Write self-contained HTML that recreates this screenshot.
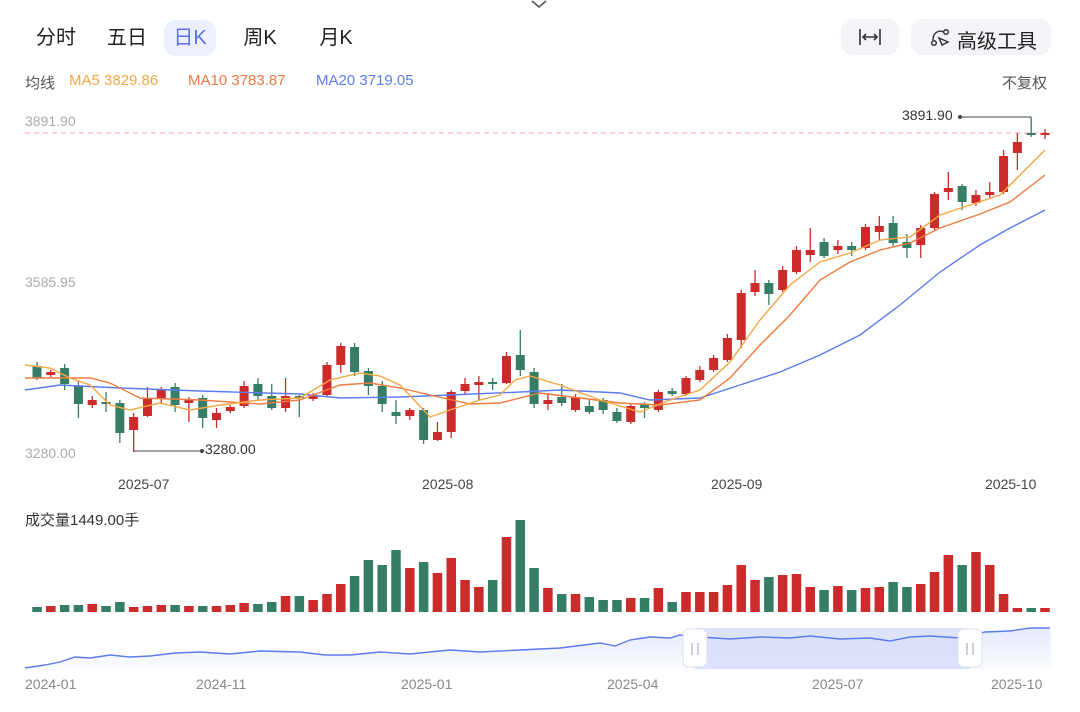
<!DOCTYPE html>
<html><head><meta charset="utf-8"><style>
*{margin:0;padding:0;box-sizing:border-box}
body{width:1080px;height:712px;background:#fff;font-family:"Liberation Sans","Noto Sans CJK SC",sans-serif;position:relative;overflow:hidden;color:#222}
.t{position:absolute;white-space:nowrap}
.tab{position:absolute;top:20px;height:36px;line-height:36px;font-size:20px;color:#222;text-align:center}
.btn{position:absolute;top:19px;height:36px;background:#f3f4f8;border-radius:12px}
</style></head><body>
<svg style="position:absolute;left:530px;top:0" width="18" height="10"><path d="M2 1 L9 7 L16 1" stroke="#555" stroke-width="1.6" fill="none"/></svg>
<div class="tab" style="left:26px;width:60px">分时</div>
<div class="tab" style="left:97px;width:60px">五日</div>
<div class="tab" style="left:164px;width:52px;background:#eceffd;border-radius:12px;color:#5b6ff0">日K</div>
<div class="tab" style="left:230px;width:60px">周K</div>
<div class="tab" style="left:306px;width:60px">月K</div>
<div class="btn" style="left:841px;width:58px"><svg width="58" height="36"><path d="M19 10v16M39 10v16M22 18h14M25 15l-3 3 3 3M33 15l3 3-3 3" stroke="#333" stroke-width="1.6" fill="none"/></svg></div>
<div class="btn" style="left:911px;width:140px"><svg style="position:absolute;left:18px;top:8px" width="22" height="22"><circle cx="5" cy="16" r="2.3" stroke="#333" fill="none" stroke-width="1.5"/><circle cx="17" cy="5" r="2.3" stroke="#333" fill="none" stroke-width="1.5"/><path d="M4 13 C4 4 12 3 14 5 M10 11 l9 4 -6 3 z" stroke="#333" fill="none" stroke-width="1.5"/></svg><span class="t" style="left:46px;top:6px;font-size:20px;color:#222">高级工具</span></div>
<div class="t" style="left:25px;top:72px;font-size:15px;color:#555">均线</div>
<div class="t" style="left:69px;top:72px;font-size:15px;color:#f5a742">MA5 3829.86</div>
<div class="t" style="left:188px;top:72px;font-size:15px;color:#f07a3f">MA10 3783.87</div>
<div class="t" style="left:316px;top:72px;font-size:15px;color:#5b7bf0">MA20 3719.05</div>
<div class="t" style="left:1002px;top:72px;font-size:15px;color:#555">不复权</div>
<div class="t" style="left:25px;top:113px;font-size:14px;color:#aaa">3891.90</div>
<div class="t" style="left:25px;top:274px;font-size:14px;color:#aaa">3585.95</div>
<div class="t" style="left:25px;top:445px;font-size:14px;color:#aaa">3280.00</div>
<div class="t" style="left:902px;top:107px;font-size:14px;color:#333">3891.90</div>
<div class="t" style="left:205px;top:441px;font-size:14px;color:#333">3280.00</div>
<div class="t" style="left:118px;top:476px;font-size:14px;color:#444">2025-07</div>
<div class="t" style="left:422px;top:476px;font-size:14px;color:#444">2025-08</div>
<div class="t" style="left:711px;top:476px;font-size:14px;color:#444">2025-09</div>
<div class="t" style="left:985px;top:476px;font-size:14px;color:#444">2025-10</div>
<div class="t" style="left:25px;top:509px;font-size:15px;color:#333">成交量1449.00手</div>
<div class="t" style="left:25px;top:676px;font-size:14px;color:#888">2024-01</div>
<div class="t" style="left:196px;top:676px;font-size:14px;color:#888">2024-11</div>
<div class="t" style="left:401px;top:676px;font-size:14px;color:#888">2025-01</div>
<div class="t" style="left:607px;top:676px;font-size:14px;color:#888">2025-04</div>
<div class="t" style="left:812px;top:676px;font-size:14px;color:#888">2025-07</div>
<div class="t" style="left:991px;top:676px;font-size:14px;color:#888">2025-10</div>
<svg id="c" style="position:absolute;left:0;top:0" width="1080" height="712"></svg>
<script>
var R="#cc2b2b",G="#367d67";
var C=[[366,378,362,380,0],[372,375,370,377,1],[368,384,364,390,0],[386,404,380,418,0],[400,405,396,408,1],[402,404,392,412,0],[403,433,400,443,0],[417,430,413,452,1],[399,416,387,417,1],[390,399,387,404,1],[387,405,383,412,0],[400,403,397,422,1],[398,418,395,428,0],[413,420,408,428,1],[407,411,405,413,1],[386,406,381,408,1],[384,396,378,400,0],[396,408,384,410,0],[396,408,378,412,1],[396,398,395,417,0],[395,399,393,401,1],[365,395,362,397,1],[346,365,343,373,1],[347,372,343,376,0],[371,386,368,395,0],[386,404,381,412,0],[412,416,400,424,0],[410,416,408,420,1],[410,440,408,444,0],[432,440,422,441,1],[392,432,390,438,1],[384,391,378,394,1],[382,385,376,400,1],[382,384,378,390,0],[356,383,352,384,1],[355,370,330,376,0],[372,404,368,408,0],[400,404,394,410,1],[397,403,384,406,0],[397,410,394,412,1],[406,412,400,414,0],[400,410,398,414,0],[412,421,408,423,0],[406,422,403,424,1],[404,408,402,418,0],[392,410,390,412,1],[391,394,388,396,0],[378,394,376,396,1],[370,380,366,382,1],[358,370,355,372,1],[338,360,334,362,1],[293,340,290,348,1],[283,292,270,296,1],[283,294,280,305,0],[270,290,266,292,1],[250,272,246,274,1],[250,255,228,262,1],[242,256,238,258,0],[246,250,240,254,1],[246,250,242,256,0],[227,248,224,250,1],[226,232,216,240,1],[223,243,216,246,0],[242,248,234,258,0],[228,245,225,258,1],[194,228,192,230,1],[188,192,172,200,1],[186,202,184,210,0],[195,203,190,206,1],[192,195,182,198,1],[156,192,150,194,1],[142,153,133,170,1],[133,135,118,137,0],[133,135,129,139,1]];
var V=[5,6,7,7,8,6,10,5,6,7,7,6,6,6,7,9,8,10,16,16,12,18,28,36,52,47,62,44,50,39,54,32,25,32,75,92,44,24,18,18,15,12,12,14,14,24,10,20,20,20,27,47,32,35,37,38,25,22,26,22,24,25,30,25,28,40,57,47,60,47,18,4,4,4];
var s='<line x1="25" y1="133" x2="1052" y2="133" stroke="#f4a0a0" stroke-dasharray="5,4"/>';
s+='<polyline points="960,117 1031,117 1031,133" stroke="#444" fill="none"/><circle cx="960" cy="117" r="2" fill="#444"/>';
s+='<polyline points="134,452 134,451 202,451" stroke="#444" fill="none"/><circle cx="202" cy="451" r="2" fill="#444"/>';
var sp=(1045-37)/73;
for(var i=0;i<C.length;i++){var c=C[i],x=37+i*sp,col=c[4]?R:G;
s+='<line x1="'+x+'" y1="'+c[2]+'" x2="'+x+'" y2="'+c[3]+'" stroke="'+col+'" stroke-width="1.3"/>';
s+='<rect x="'+(x-4.5)+'" y="'+c[0]+'" width="9" height="'+Math.max(1.5,c[1]-c[0])+'" fill="'+col+'"/>';
var h=V[i]||4;s+='<rect x="'+(x-4.75)+'" y="'+(612-h)+'" width="9.5" height="'+h+'" fill="'+col+'"/>';}
function pl(p,c){s+='<polyline points="'+p+'" stroke="'+c+'" stroke-width="1.4" fill="none"/>';}
pl("25,390 60,385 120,388 200,391 300,394 340,398 400,397 450,395 520,392 560,390 620,393 650,400 700,398 740,385 780,372 820,355 860,335 900,305 940,272 980,245 1010,228 1045,210","#5b7bf0");
pl("25,378 90,378 110,383 140,398 200,400 260,404 300,400 340,385 370,383 400,388 430,395 470,404 500,403 540,393 580,398 620,403 660,405 700,400 730,378 760,345 790,315 820,280 850,262 880,250 910,243 940,228 980,214 1010,202 1045,175","#f07a3f");
pl("25,365 50,368 70,378 90,385 110,405 130,410 160,403 190,410 220,405 260,400 300,398 330,380 360,373 380,376 400,385 430,417 450,410 480,400 500,395 515,380 530,376 560,385 600,400 640,412 670,400 700,390 730,362 760,320 790,285 820,262 850,253 880,240 910,237 940,215 970,205 1000,195 1020,175 1045,150","#f5a742");
s+='<defs><linearGradient id="g" x1="0" y1="0" x2="0" y2="1"><stop offset="0" stop-color="#e6eafc"/><stop offset="1" stop-color="#fbfcff"/></linearGradient></defs>';
var base=[[25,668],[45,665],[60,662],[75,657],[90,658],[110,655],[130,657],[150,656],[175,653],[200,652],[230,654],[260,651],[300,652],[325,655],[350,655],[380,652],[410,654],[450,650],[480,652],[520,650],[560,648],[600,643],[615,646],[630,640],[650,637],[670,638],[680,635],[700,637],[730,639],[760,637],[790,638],[810,636],[840,639],[870,638],[890,641],[910,637],[930,636],[960,638],[985,632],[1010,631],[1030,628],[1050,628]];
var np=base.map(function(p){return p.join(",")}).join(" ");
s+='<polygon points="'+np+' 1052,670 25,670" fill="url(#g)"/>';
s+='<rect x="695" y="628" width="275" height="41" fill="#d4dcf9" opacity="0.8"/>';
pl(np,"#5b7bf0");
[695,970].forEach(function(x){s+='<rect x="'+(x-12)+'" y="629" width="24" height="38" rx="6" fill="#fff" stroke="#dde" />';s+='<line x1="'+(x-3)+'" y1="643" x2="'+(x-3)+'" y2="655" stroke="#ccd" stroke-width="2"/><line x1="'+(x+3)+'" y1="643" x2="'+(x+3)+'" y2="655" stroke="#ccd" stroke-width="2"/>';});
document.getElementById('c').innerHTML=s;
</script>
</body></html>
